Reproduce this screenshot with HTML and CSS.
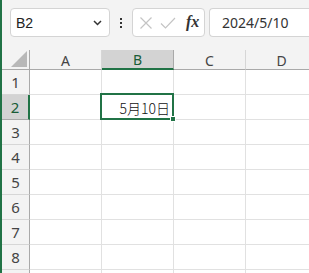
FILE: index.html
```html
<!DOCTYPE html>
<html lang="ja">
<head>
<meta charset="utf-8">
<link rel="stylesheet" href="styles.css">
</head>
<body>
<div class="app">
  <div class="toolbar">
    <div class="namebox">
      <span class="ref">B2</span>
      <svg class="chev" width="9" height="6" viewBox="0 0 9 6"><path d="M1 1 L4.5 4.5 L8 1" fill="none" stroke="#333" stroke-width="1.5"/></svg>
    </div>
    <div class="dots"><i></i><i></i><i></i></div>
    <div class="fbtns">
      <svg width="14" height="14" viewBox="0 0 14 14"><path d="M1.5 1.5 L12.5 12.5 M12.5 1.5 L1.5 12.5" stroke="#c4c4c4" stroke-width="1.2" fill="none"/></svg>
      <svg width="16" height="14" viewBox="0 0 16 14"><path d="M1 7.5 L5.5 12 L15 2" stroke="#c4c4c4" stroke-width="1.2" fill="none"/></svg>
      <span class="fx">fx</span>
    </div>
    <div class="fbar">2024/5/10</div>
  </div>
  <div class="grid">
    <div class="hd corner"><span class="tri"></span></div>
    <div class="hd col">A</div>
    <div class="hd col sel">B</div>
    <div class="hd col">C</div>
    <div class="hd col">D</div>

    <div class="hd row">1</div><div class="c"></div><div class="c"></div><div class="c"></div><div class="c"></div>
    <div class="hd row sel">2</div><div class="c"></div><div class="c active"><span class="val">5月10日</span><span class="selbox"><span class="handle"></span></span></div><div class="c"></div><div class="c"></div>
    <div class="hd row">3</div><div class="c"></div><div class="c"></div><div class="c"></div><div class="c"></div>
    <div class="hd row">4</div><div class="c"></div><div class="c"></div><div class="c"></div><div class="c"></div>
    <div class="hd row">5</div><div class="c"></div><div class="c"></div><div class="c"></div><div class="c"></div>
    <div class="hd row">6</div><div class="c"></div><div class="c"></div><div class="c"></div><div class="c"></div>
    <div class="hd row">7</div><div class="c"></div><div class="c"></div><div class="c"></div><div class="c"></div>
    <div class="hd row">8</div><div class="c"></div><div class="c"></div><div class="c"></div><div class="c"></div>
    <div class="hd row"></div><div class="c"></div><div class="c"></div><div class="c"></div><div class="c"></div>
  </div>
</div>
</body>
</html>
```

FILE: styles.css
```css
* { box-sizing: border-box; }
html, body { margin: 0; padding: 0; }
body {
  width: 309px;
  height: 273px;
  overflow: hidden;
  background: #f3f3f3;
  font-family: "Noto Sans", "Noto Sans CJK JP", sans-serif;
}
.app {
  border-left: 2px solid #217346;
  height: 273px;
  overflow: hidden;
}
.toolbar {
  display: flex;
  align-items: flex-start;
  height: 50px;
  padding: 8px 0 0 8px;
  white-space: nowrap;
}
.namebox {
  width: 100px;
  height: 29px;
  flex: none;
  background: #fff;
  border: 1px solid #d4d4d4;
  border-radius: 4px;
  display: flex;
  align-items: center;
  justify-content: space-between;
  padding: 0 7px 0 5px;
}
.ref {
  font-family: "Liberation Sans", Arial, sans-serif;
  font-size: 14px;
  color: #222;
}
.dots {
  width: 22px;
  height: 29px;
  flex: none;
  display: flex;
  flex-direction: column;
  align-items: center;
  justify-content: center;
  gap: 2px;
}
.dots i {
  display: block;
  width: 2px;
  height: 2px;
  background: #333;
}
.fbtns {
  width: 73px;
  height: 29px;
  flex: none;
  background: #fff;
  border: 1px solid #d4d4d4;
  border-radius: 4px;
  display: flex;
  align-items: center;
  padding: 0 0 0 6px;
  gap: 7px;
}
.fx {
  font-family: "Liberation Serif", "DejaVu Serif", serif;
  font-style: italic;
  font-weight: bold;
  font-size: 16px;
  color: #333;
  margin-left: 3px;
  margin-top: -2px;
}
.fbar {
  margin-left: 4px;
  flex: 1;
  height: 29px;
  background: #fff;
  border: 1px solid #d4d4d4;
  border-right: none;
  border-radius: 4px 0 0 4px;
  font-family: "Noto Sans", sans-serif;
  font-size: 14px;
  line-height: 27px;
  color: #333;
  padding-left: 12px;
}
.grid {
  display: grid;
  grid-template-columns: 28px repeat(4, 72px);
  grid-template-rows: 20px repeat(9, 25px);
  background: #fff;
}
.hd {
  background: #f3f3f3;
  color: #444;
  font-family: "Noto Sans", sans-serif;
  font-size: 14px;
  display: flex;
  align-items: center;
  justify-content: center;
}
.col {
  border-right: 1px solid #d6d6d6;
  border-bottom: 1px solid #a9a9a9;
  padding-top: 1px;
}
.col.sel {
  background: #d3d3d3;
  color: #185c37;
  border-bottom: 2px solid #217346;
  border-right: 1px solid #a9a9a9;
}
.row {
  border-right: 1px solid #a9a9a9;
  border-bottom: 1px solid #d6d6d6;
  font-size: 15px;
}
.row.sel {
  background: #d3d3d3;
  color: #185c37;
  border-right: 2px solid #217346;
  border-bottom: 1px solid #a9a9a9;
}
.corner {
  border-right: 1px solid #a9a9a9;
  border-bottom: 1px solid #a9a9a9;
  position: relative;
}
.tri {
  position: absolute;
  right: 2px;
  bottom: 2px;
  width: 0;
  height: 0;
  border-left: 16px solid transparent;
  border-bottom: 16px solid #b8b8b8;
}
.c {
  border-right: 1px solid #e1e1e1;
  border-bottom: 1px solid #e1e1e1;
}
.active {
  position: relative;
  display: flex;
  align-items: center;
  justify-content: flex-end;
  padding-right: 3px;
}
.val {
  font-family: "Noto Sans CJK JP", sans-serif;
  font-size: 14px;
  font-weight: 300;
  color: #111;
  padding-top: 1px;
}
.selbox {
  position: absolute;
  left: -2px;
  top: -2px;
  right: -1px;
  bottom: -1px;
  border: 2px solid #217346;
}
.handle {
  position: absolute;
  right: -4px;
  bottom: -4px;
  width: 6px;
  height: 6px;
  background: #217346;
  border: 1px solid #fff;
}
```
